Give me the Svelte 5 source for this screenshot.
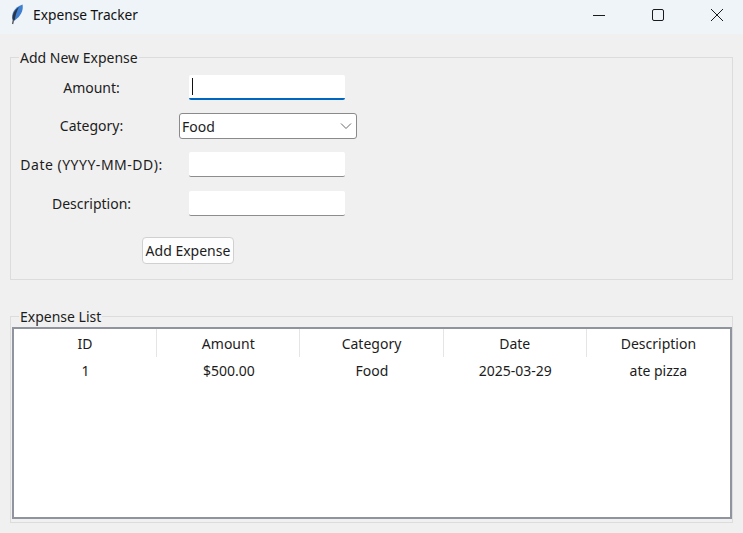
<script>
  const columns = [
    { label: 'ID', value: '1' },
    { label: 'Amount', value: '$500.00' },
    { label: 'Category', value: 'Food' },
    { label: 'Date', value: '2025-03-29' },
    { label: 'Description', value: 'ate pizza' }
  ];
</script>

<div class="window">
  <header class="titlebar">
    <svg class="feather" width="16" height="22" viewBox="0 0 16 22" aria-hidden="true">
      <path d="M3.6 20 L5 13" stroke="#4a4d52" stroke-width="1.3" fill="none" />
      <path d="M3.6 15.5 C2 10 5 3.5 13.6 0.6 C14.6 7 11.5 12.5 5.6 16.5 Z" fill="#3f7fd0" />
      <path d="M3.6 15.5 C3 10.5 5.5 6 10 3 C7.5 7.5 6.5 11.5 5.6 16.5 Z" fill="#2a3648" />
    </svg>
    <span class="title">Expense Tracker</span>
    <div class="controls">
      <svg class="ctl" width="14" height="14" viewBox="0 0 14 14" aria-hidden="true"><path d="M1 7.5H13" stroke="#1a1a1a" stroke-width="1" /></svg>
      <svg class="ctl" width="14" height="14" viewBox="0 0 14 14" aria-hidden="true"><rect x="1.5" y="1.5" width="11" height="11" rx="1.5" fill="none" stroke="#1a1a1a" stroke-width="1" /></svg>
      <svg class="ctl" width="14" height="14" viewBox="0 0 14 14" aria-hidden="true"><path d="M1 1L13 13M13 1L1 13" stroke="#1a1a1a" stroke-width="1" /></svg>
    </div>
  </header>

  <main class="content">
    <fieldset class="group add">
      <legend>Add New Expense</legend>
      <div class="form">
        <span class="label">Amount:</span>
        <div class="entry focused"><span class="caret"></span></div>
        <span class="label">Category:</span>
        <div class="combo">
          <span>Food</span>
          <svg width="12" height="8" viewBox="0 0 12 8" aria-hidden="true"><path d="M1 1.5L6 6.5L11 1.5" fill="none" stroke="#6a6a6a" stroke-width="1" /></svg>
        </div>
        <span class="label wide">Date (YYYY-MM-DD):</span>
        <div class="entry"></div>
        <span class="label">Description:</span>
        <div class="entry"></div>
        <button class="btn">Add Expense</button>
      </div>
    </fieldset>

    <fieldset class="group list">
      <legend>Expense List</legend>
      <div class="table">
        <div class="row head">
          {#each columns as c}<div class="cell">{c.label}</div>{/each}
        </div>
        <div class="row">
          {#each columns as c}<div class="cell">{c.value}</div>{/each}
        </div>
      </div>
    </fieldset>
  </main>
</div>

<style>
  :global(body) { margin: 0; background: #f0f0f0; overflow: hidden; }
  .window {
    width: 743px; height: 533px; overflow: hidden;
    font-family: "Noto Sans", "Open Sans", sans-serif;
    font-size: 14px; color: #1c1c1c; background: #f0f0f0;
  }
  .titlebar {
    height: 34px; background: #eff4f9; display: flex; align-items: center;
    padding: 0 0 5px 9px; box-sizing: border-box;
  }
  .feather { margin-right: 8px; }
  .title { font-size: 13.75px; color: #111; }
  .controls { margin-left: auto; display: flex; gap: 45px; padding-right: 19px; }
  .ctl { display: block; }
  .content { padding: 14px 10px 0; display: flex; flex-direction: column; gap: 27px; }
  .group {
    margin: 0; border: 1px solid #dcdcdc; padding: 0; min-width: 0;
    box-sizing: border-box;
  }
  .group legend { margin-left: 8px; padding: 0 1px; line-height: 19px; height: 19px; }
  .add { height: 232px; }
  .list { height: 216px; }
  .form {
    display: grid; grid-template-columns: 153px 200px; padding: 1px 0 0 4px;
    grid-template-rows: 38px 39px 39px 39px auto; align-items: center; justify-items: center;
  }
  .wide { letter-spacing: 0.5px; }
  .entry {
    width: 156px; height: 25px; background: #fff; border-bottom: 1px solid #8d8d8d;
    box-sizing: border-box; border-radius: 2px; position: relative; margin-right: 3px;
  }
  .entry.focused { border-bottom: 2px solid #0067c0; }
  .caret { position: absolute; left: 3px; top: 3px; width: 1px; height: 17px; background: #111; }
  .combo {
    width: 178px; height: 26px; background: #fff; border: 1px solid #8a8a8a; border-radius: 3px;
    box-sizing: border-box; display: flex; align-items: center; justify-content: space-between;
    padding: 0 4px 0 2px; margin-top: 1px;
  }
  .btn {
    grid-column: 1 / 3; margin-top: 14px; margin-right: 7px; width: 92px; height: 27px; padding: 0;
    background: #fdfdfd; border: 1px solid #d0d0d0; border-radius: 4px;
    font: inherit; color: inherit;
  }
  .table {
    margin: 1px 0 0 1px; width: 720px; height: 192px; background: #fff;
    border: 2px solid #8f949e; box-sizing: border-box;
  }
  .row { display: grid; grid-template-columns: repeat(5, 1fr); text-align: center; }
  .head { height: 28px; }
  .head .cell { border-right: 1px solid #e5e5e5; line-height: 30px; height: 28px; }
  .head .cell:last-child { border-right: 0; }
  .row:not(.head) .cell { line-height: 28px; }
</style>
